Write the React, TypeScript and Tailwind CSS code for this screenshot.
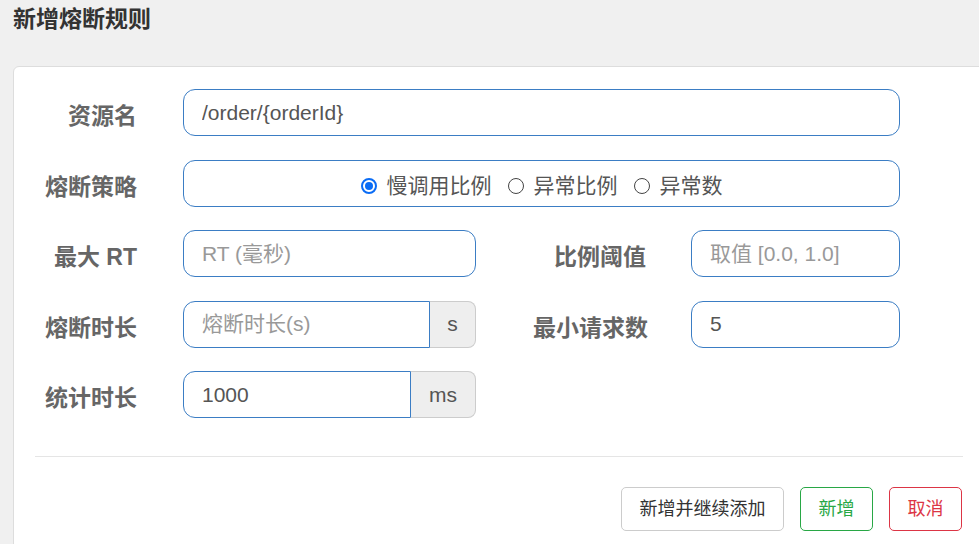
import React from "react";

type RadioOption = { label: string; checked?: boolean };

const strategies: RadioOption[] = [
  { label: "慢调用比例", checked: true },
  { label: "异常比例" },
  { label: "异常数" },
];

function FieldLabel({ text, width }: { text: string; width: string }) {
  return (
    <div
      className={`${width} h-[47px] shrink-0 flex items-center justify-end pt-[8px] text-[23px] font-bold text-[#666]`}
    >
      {text}
    </div>
  );
}

function TextInput({
  value,
  placeholder,
  width,
}: {
  value?: string;
  placeholder?: string;
  width: string;
}) {
  return (
    <input
      readOnly
      defaultValue={value}
      placeholder={placeholder}
      className={`${width} h-[47px] rounded-[12px] border border-[#3b7dc4] bg-white px-[18px] text-[21px] text-[#555] placeholder:text-[#999] outline-none`}
    />
  );
}

function AddonInput({
  value,
  placeholder,
  inputWidth,
  addon,
  addonWidth,
}: {
  value?: string;
  placeholder?: string;
  inputWidth: string;
  addon: string;
  addonWidth: string;
}) {
  return (
    <div className="flex h-[47px]">
      <input
        readOnly
        defaultValue={value}
        placeholder={placeholder}
        className={`${inputWidth} h-full rounded-l-[12px] border border-[#3b7dc4] bg-white px-[18px] text-[21px] text-[#555] placeholder:text-[#999] outline-none`}
      />
      <div
        className={`${addonWidth} h-full flex items-center justify-center rounded-r-[8px] border border-l-0 border-[#ccc] bg-[#eee] text-[21px] text-[#555]`}
      >
        {addon}
      </div>
    </div>
  );
}

function Radio({ option }: { option: RadioOption }) {
  return (
    <label className="flex items-center gap-[10px] pt-[6px]">
      {option.checked ? (
        <span className="shrink-0 w-[16px] h-[16px] rounded-full border-[2px] border-[#0a6cf5] flex items-center justify-center">
          <span className="w-[8px] h-[8px] rounded-full bg-[#0a6cf5]" />
        </span>
      ) : (
        <span className="shrink-0 w-[16px] h-[16px] rounded-full border border-[#444] bg-white" />
      )}
      <span className="text-[21px] text-[#555]">{option.label}</span>
    </label>
  );
}

export default function App() {
  return (
    <div
      className="w-[979px] h-[544px] overflow-hidden bg-[#f0f0f0]"
      style={{ fontFamily: '"Liberation Sans", "Noto Sans CJK SC", sans-serif' }}
    >
      <div className="h-[66px] pl-[13px] pt-[4px]">
        <h1 className="leading-[30px] text-[23px] font-bold text-[#333]">新增熔断规则</h1>
      </div>

      <div className="ml-[13px] w-[972px] h-[500px] rounded-t-[6px] border border-[#ddd] bg-white pt-[22px]">
        <div className="flex flex-col gap-[23.5px]">
          <div className="flex gap-[46px]">
            <FieldLabel text="资源名" width="w-[123px]" />
            <TextInput value="/order/{orderId}" width="w-[717px]" />
          </div>

          <div className="flex gap-[46px]">
            <FieldLabel text="熔断策略" width="w-[123px]" />
            <div className="w-[717px] h-[47px] rounded-[12px] border border-[#3b7dc4] flex items-center justify-center gap-[16px]">
              {strategies.map((s) => (
                <Radio key={s.label} option={s} />
              ))}
            </div>
          </div>

          <div className="flex">
            <FieldLabel text="最大 RT" width="w-[123px]" />
            <div className="ml-[46px]">
              <TextInput placeholder="RT (毫秒)" width="w-[293px]" />
            </div>
            <FieldLabel text="比例阈值" width="w-[170px]" />
            <div className="ml-[45px]">
              <TextInput placeholder="取值 [0.0, 1.0]" width="w-[209px]" />
            </div>
          </div>

          <div className="flex">
            <FieldLabel text="熔断时长" width="w-[123px]" />
            <div className="ml-[46px]">
              <AddonInput
                placeholder="熔断时长(s)"
                inputWidth="w-[247px]"
                addon="s"
                addonWidth="w-[46px]"
              />
            </div>
            <FieldLabel text="最小请求数" width="w-[172px]" />
            <div className="ml-[43px]">
              <TextInput value="5" width="w-[209px]" />
            </div>
          </div>

          <div className="flex">
            <FieldLabel text="统计时长" width="w-[123px]" />
            <div className="ml-[46px]">
              <AddonInput
                value="1000"
                inputWidth="w-[228px]"
                addon="ms"
                addonWidth="w-[65px]"
              />
            </div>
          </div>
        </div>

        <hr className="mx-[21px] mt-[38px] border-0 border-t border-[#e5e5e5]" />

        <div className="mt-[30px] mr-[22px] flex justify-end gap-[16px]">
          <button className="w-[163px] h-[44px] rounded-[5px] border border-[#ccc] bg-white text-[18px] text-[#333]">
            新增并继续添加
          </button>
          <button className="w-[73px] h-[44px] rounded-[5px] border border-[#28a745] bg-white text-[18px] text-[#28a745]">
            新增
          </button>
          <button className="w-[73px] h-[44px] rounded-[5px] border border-[#dc3545] bg-white text-[18px] text-[#dc3545]">
            取消
          </button>
        </div>
      </div>
    </div>
  );
}
